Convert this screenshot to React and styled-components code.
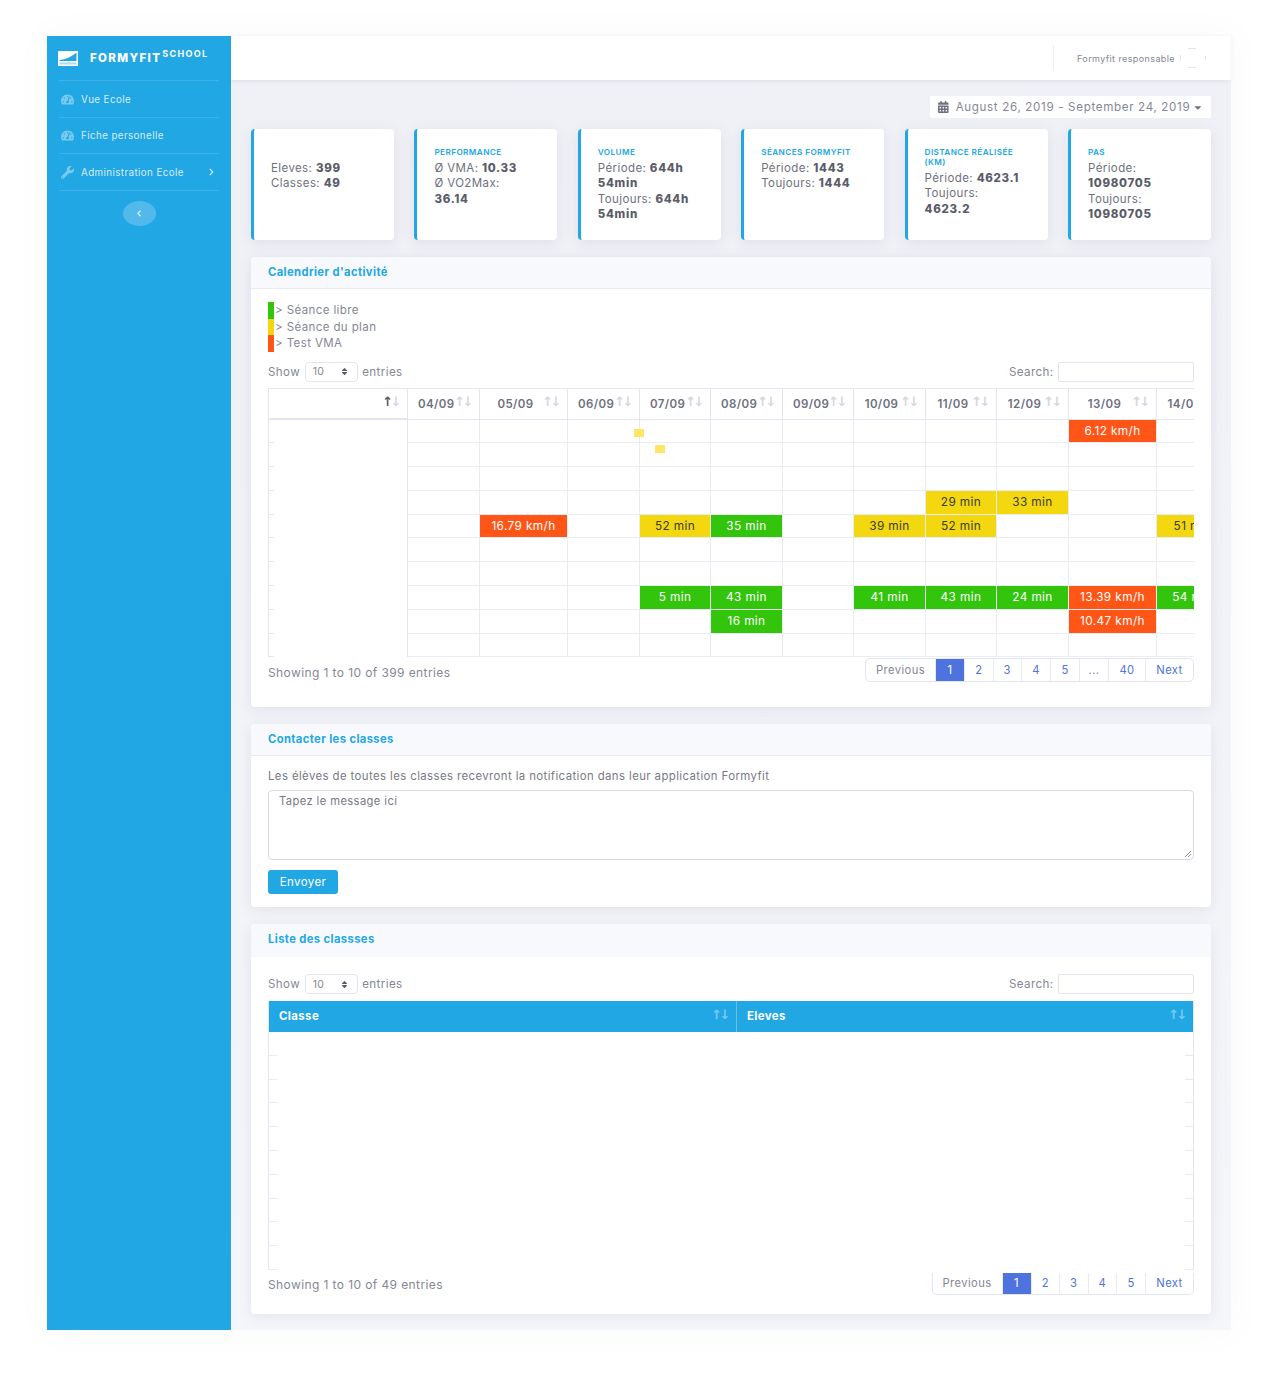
import React from "react";
import styled, { createGlobalStyle } from "styled-components";
import { FaTachometerAlt, FaWrench, FaChevronRight, FaChevronLeft, FaCalendarAlt, FaCaretDown, FaSort } from "react-icons/fa";

const Global = createGlobalStyle`
  html, body { margin: 0; padding: 0; background: #fff; }
  body { font-family: Inter, "Open Sans", sans-serif; font-size: 11.5px; color: #6e707e; letter-spacing: 0.4px; }
  * { box-sizing: border-box; }
`;

const Page = styled.div`
  width: 1278px;
  height: 1376px;
  padding: 36px 47px 46px;
`;
const Frame = styled.div`
  display: flex;
  width: 1184px;
  height: 1294px;
  box-shadow: 0 0 30px rgba(120, 130, 170, 0.05);
`;
const Sidebar = styled.aside`
  width: 184px;
  flex: none;
  background: #22a7e5;
  padding: 0 12px;
  display: flex;
  flex-direction: column;
`;
const Brand = styled.div`
  height: 44px;
  margin: 0 -1px;
  display: flex;
  align-items: center;
  gap: 12px;
  color: #fff;
`;
const BrandText = styled.div`
  font-weight: 800;
  font-size: 11.5px;
  letter-spacing: 1.35px;
  display: flex;
  align-items: flex-start;
  margin-top: -1px;
  sup {
    font-size: 9px;
    font-weight: 700;
    line-height: 9px;
    margin-top: -2px;
    margin-left: 1px;
    letter-spacing: 1.3px;
  }
`;
const NavItem = styled.div`
  height: 36.6px;
  border-top: 1px solid rgba(255, 255, 255, 0.13);
  display: flex;
  align-items: center;
  padding: 1px 4px 0 2px;
  gap: 7px;
  color: rgba(255, 255, 255, 0.82);
  font-size: 9.8px;
  svg { color: rgba(255, 255, 255, 0.4); width: 13px; height: 13px; flex: none; }
  span { flex: 1; }
`;
const NavEnd = styled.div`
  border-top: 1px solid rgba(255, 255, 255, 0.13);
  padding-top: 10px;
  display: flex;
  justify-content: center;
`;
const Toggle = styled.div`
  width: 33px;
  height: 25px;
  border-radius: 50%;
  background: rgba(255, 255, 255, 0.22);
  display: flex;
  align-items: center;
  justify-content: center;
  color: rgba(255, 255, 255, 0.8);
  svg { width: 6px; height: 7px; }
`;
const NavArrow = styled(FaChevronRight)`
  && { width: 7px; height: 8px; color: rgba(255, 255, 255, 0.8); }
`;
const Main = styled.main`
  flex: 1;
  min-width: 0;
  background: linear-gradient(#eff0f5, #f5f6fa);
`;
const Topbar = styled.header`
  height: 44px;
  background: #fff;
  box-shadow: 0 1px 4px rgba(90, 100, 130, 0.1);
  display: flex;
  justify-content: flex-end;
  align-items: center;
  padding-right: 22px;
`;
const TopDivider = styled.div`
  width: 1px;
  height: 25px;
  background: #eceef3;
  margin-right: 23px;
`;
const UserName = styled.div`
  font-size: 9px;
  color: #858796;
  margin-right: 4px;
`;
const Content = styled.div`
  padding: 16px 20px 0;
`;
const DateRow = styled.div`
  display: flex;
  justify-content: flex-end;
  margin-bottom: 11px;
`;
const DatePicker = styled.div`
  width: 281px;
  height: 22px;
  background: #fff;
  border-radius: 2px;
  display: flex;
  align-items: center;
  padding: 0 8px;
  gap: 7px;
  color: #858796;
  font-size: 11.6px;
  letter-spacing: 0.66px;
  white-space: nowrap;
  svg:first-child { width: 12px; height: 12px; color: #6e707e; }
  svg:last-child { width: 11px; height: 11px; margin-left: -4px; color: #6e707e; }
`;
const Cards = styled.div`
  display: grid;
  grid-template-columns: repeat(6, 143px);
  justify-content: space-between;
  margin-bottom: 17px;
`;
const Card = styled.div`
  height: 111px;
  background: #fff;
  border-left: 3px solid #22a7e5;
  border-radius: 4px;
  box-shadow: 0 3px 14px rgba(90, 100, 140, 0.1);
  padding: 18px 24px 0 17px;
  font-size: 11.5px;
  line-height: 15.4px;
  color: #6e707e;
  b { font-weight: 800; color: #5a5c69; letter-spacing: 0.7px; }
`;
const CardTitle = styled.div`
  min-height: 10px;
  margin-bottom: 4px;
  font-size: 8.2px;
  line-height: 10px;
  color: #22a7e5;
  font-weight: 600;
  text-transform: uppercase;
`;
const Panel = styled.section`
  background: #fff;
  border-radius: 4px;
  box-shadow: 0 3px 14px rgba(90, 100, 140, 0.11);
  margin-bottom: 17px;
  height: ${(p) => p.$h}px;
  overflow: hidden;
`;
const PanelHead = styled.div`
  height: ${(p) => p.$h || 32}px;
  background: #f8f9fc;
  border-bottom: ${(p) => (p.$flat ? "none" : "1px solid #e9ebf2")};
  padding: 0 17px ${(p) => (p.$flat ? 3 : 2)}px;
  display: flex;
  align-items: center;
  color: #22a7e5;
  font-weight: 700;
  font-size: 11.2px;
`;
const PanelBody = styled.div`
  padding: ${(p) => p.$top}px 17px 0;
`;
const LegendRow = styled.div`
  display: flex;
  align-items: center;
  height: 16.5px;
  color: #858796;
  font-size: 11.5px;
`;
const Swatch = styled.span`
  width: 6px;
  height: 16.5px;
  background: ${(p) => p.$c};
  margin-right: 1px;
`;
const Controls = styled.div`
  display: flex;
  justify-content: space-between;
  align-items: center;
  height: 20px;
  margin-top: ${(p) => p.$top}px;
  margin-bottom: ${(p) => p.$bottom}px;
  color: #858796;
  font-size: 11.6px;
`;
const ControlGroup = styled.div`
  display: flex;
  align-items: center;
  gap: 4.5px;
`;
const SelectBox = styled.div`
  width: 53px;
  height: 20px;
  border: 1px solid #e3e6f0;
  border-radius: 4px;
  display: flex;
  align-items: center;
  justify-content: space-between;
  padding: 0 9px 0 7px;
  font-size: 10.5px;
  svg { width: 7px; height: 9px; color: #5a5c69; }
`;
const SearchBox = styled.div`
  width: 136px;
  height: 20px;
  border: 1px solid #e3e6f0;
  border-radius: 2px;
`;
const Clip = styled.div`
  width: 926px;
  overflow: hidden;
`;
const CalTable = styled.table`
  table-layout: fixed;
  border-collapse: separate;
  border-spacing: 0;
  width: 961px;
`;
const HeadCell = styled.th`
  position: relative;
  height: 32px;
  padding: 0 26px 0 10px;
  border-top: 1px solid #e3e6f0;
  border-right: 1px solid #e3e6f0;
  border-left: ${(p) => (p.$first ? "1px solid #e3e6f0" : "none")};
  border-bottom: ${(p) => (p.$first ? "2px solid #e3e6f0" : "1px solid #e3e6f0")};
  font-weight: 600;
  font-size: 11.5px;
  color: #6e707e;
  text-align: center;
  white-space: nowrap;
`;
const SortMark = styled.span`
  position: absolute;
  right: ${(p) => p.$right || 8}px;
  top: ${(p) => p.$top || 5}px;
  font-family: "DejaVu Sans", sans-serif;
  font-size: 13px;
  font-weight: 700;
  letter-spacing: -2.5px;
  color: ${(p) => p.$c || "#d5d7df"};
`;
const ActiveArrow = styled.b`
  color: #5a5c69;
`;
const Row = styled.tr`
  height: 23.8px;
`;
const NameCell = styled.td`
  padding: 0;
  border-left: 1px solid #e3e6f0;
  border-right: 1px solid #e3e6f0;
  background: linear-gradient(#e3e6f0, #e3e6f0) left bottom / 5px 1px no-repeat;
`;
const Cell = styled.td`
  position: relative;
  padding: 0;
  height: 23.8px;
  border-right: 1px solid #eaecf3;
  border-bottom: 1px solid #eaecf3;
  background: ${(p) => p.$bg || "transparent"};
  color: ${(p) => p.$fg || "inherit"};
  text-align: center;
  font-size: 11.8px;
  white-space: nowrap;
  overflow: ${(p) => (p.$bg ? "hidden" : "visible")};
`;
const Blip = styled.i`
  position: absolute;
  left: ${(p) => p.$l}px;
  top: ${(p) => p.$t}px;
  width: 10px;
  height: 8px;
  background: #ffe564;
`;
const Footer = styled.div`
  display: flex;
  justify-content: space-between;
  align-items: flex-start;
  margin-top: ${(p) => p.$top}px;
`;
const Showing = styled.div`
  color: #858796;
  font-size: 12px;
  margin-top: ${(p) => p.$top}px;
`;
const Pager = styled.div`
  display: flex;
  height: ${(p) => p.$h}px;
  border: 1px solid #e3e6f0;
  border-top: ${(p) => (p.$open ? "none" : "1px solid #e3e6f0")};
  border-radius: ${(p) => (p.$open ? "0 0 5px 5px" : "5px")};
`;
const PageLink = styled.div`
  width: ${(p) => p.$w}px;
  display: flex;
  align-items: center;
  justify-content: center;
  border-right: ${(p) => (p.$last ? "none" : "1px solid #e9ebf2")};
  font-size: 11.2px;
  color: ${(p) => (p.$on ? "#fff" : p.$off ? "#858796" : "#4e73df")};
  background: ${(p) => (p.$on ? "#4e73df" : "transparent")};
`;
const NoteText = styled.div`
  color: #777985;
  font-size: 11.4px;
  margin-bottom: 7px;
`;
const MessageBox = styled.div`
  height: 70px;
  border: 1px solid #d6d8e2;
  border-radius: 4px;
  padding: 3px 10px;
  font-size: 11.2px;
  color: #777985;
  position: relative;
`;
const Grip = styled.svg`
  position: absolute;
  right: 1px;
  bottom: 1px;
`;
const SendButton = styled.div`
  width: 70px;
  height: 24px;
  margin-top: 10px;
  background: #22a7e5;
  border-radius: 3px;
  color: #fff;
  font-size: 11.5px;
  display: flex;
  align-items: center;
  justify-content: center;
`;
const ClassTable = styled.table`
  table-layout: fixed;
  border-collapse: separate;
  border-spacing: 0;
  width: 926px;
  border-left: 1px solid #e3e6f0;
  border-right: 1px solid #e3e6f0;
`;
const BlueHead = styled.th`
  position: relative;
  height: 31px;
  background: #22a7e5;
  border-right: ${(p) => (p.$last ? "none" : "1px solid rgba(255,255,255,.3)")};
  color: #fff;
  font-size: 11.4px;
  font-weight: 700;
  text-align: left;
  padding: 0 10px 2px;
`;
const ClassRow = styled.tr`
  height: 23.8px;
`;
const ClassCell = styled.td`
  padding: 0;
  background: linear-gradient(#e9ebf2, #e9ebf2) ${(p) => (p.$right ? "right" : "left")} bottom / 8px 1px no-repeat;
`;

const Logo = () => (
  <svg width="20" height="15" viewBox="0 0 20 15">
    <rect width="20" height="15" rx="0.5" fill="#fff" />
    <path d="M1.5 9 C8 8.5 13 6 18.5 1.5 V10 H1.5Z" fill="#22a7e5" />
    <rect x="1.5" y="11.5" width="17" height="2" fill="#a9dbf4" />
  </svg>
);
const Avatar = () => (
  <svg width="30" height="24" viewBox="0 0 30 24">
    <g stroke="#e6e7ec" fill="none">
      <path d="M1.5 9v6" />
      <path d="M9 2.5h8" />
      <path d="M9 21.5h8" />
      <path d="M26.5 10v4" />
    </g>
  </svg>
);

const colW = [140, 72, 88, 72, 71, 72, 71, 72, 71, 72, 88, 72];
const dates = ["", "04/09", "05/09", "06/09", "07/09", "08/09", "09/09", "10/09", "11/09", "12/09", "13/09", "14/09"];
const G = ["#33c40c", "#fff"], Y = ["#f3d70f", "#3c3c34"], R = ["#ff5517", "#fff"];
const rows = [
  { 10: ["6.12 km/h", R] },
  {},
  {},
  { 8: ["29 min", Y], 9: ["33 min", Y] },
  { 2: ["16.79 km/h", R], 4: ["52 min", Y], 5: ["35 min", G], 7: ["39 min", Y], 8: ["52 min", Y], 11: ["51 min", Y] },
  {},
  {},
  { 4: ["5 min", G], 5: ["43 min", G], 7: ["41 min", G], 8: ["43 min", G], 9: ["24 min", G], 10: ["13.39 km/h", R], 11: ["54 min", G] },
  { 5: ["16 min", G], 10: ["10.47 km/h", R] },
  {},
];
const pages1 = [["Previous", 70, "off"], ["1", 29, "on"], ["2", 28.5], ["3", 28.5], ["4", 29], ["5", 29], ["...", 29, "off"], ["40", 37], ["Next", 47, "last"]];
const pages2 = [["Previous", 70, "off"], ["1", 29, "on"], ["2", 28.5], ["3", 28.5], ["4", 28.5], ["5", 29], ["Next", 47, "last"]];

const Pagination = ({ items, h, open }) => (
  <Pager $h={h} $open={open}>
    {items.map(([t, w, k]) => (
      <PageLink key={t} $w={w} $on={k === "on"} $off={k === "off"} $last={k === "last"}>{t}</PageLink>
    ))}
  </Pager>
);

const TableControls = ({ top, bottom }) => (
  <Controls $top={top} $bottom={bottom}>
    <ControlGroup>
      Show
      <SelectBox>10<FaSort /></SelectBox>
      entries
    </ControlGroup>
    <ControlGroup>
      Search:
      <SearchBox />
    </ControlGroup>
  </Controls>
);

export default function App() {
  return (
    <Page>
      <Global />
      <Frame>
        <Sidebar>
          <Brand>
            <Logo />
            <BrandText>FORMYFIT<sup>SCHOOL</sup></BrandText>
          </Brand>
          <NavItem><FaTachometerAlt /><span>Vue Ecole</span></NavItem>
          <NavItem><FaTachometerAlt /><span>Fiche personelle</span></NavItem>
          <NavItem><FaWrench /><span>Administration Ecole</span><NavArrow /></NavItem>
          <NavEnd><Toggle><FaChevronLeft /></Toggle></NavEnd>
        </Sidebar>
        <Main>
          <Topbar>
            <TopDivider />
            <UserName>Formyfit responsable</UserName>
            <Avatar />
          </Topbar>
          <Content>
            <DateRow>
              <DatePicker>
                <FaCalendarAlt />
                August 26, 2019 - September 24, 2019
                <FaCaretDown />
              </DatePicker>
            </DateRow>
            <Cards>
              <Card><CardTitle />Eleves: <b>399</b><br />Classes: <b>49</b></Card>
              <Card><CardTitle>Performance</CardTitle>Ø VMA: <b>10.33</b><br />Ø VO2Max: <b>36.14</b></Card>
              <Card><CardTitle>Volume</CardTitle>Période: <b>644h 54min</b><br />Toujours: <b>644h 54min</b></Card>
              <Card><CardTitle>Séances Formyfit</CardTitle>Période: <b>1443</b><br />Toujours: <b>1444</b></Card>
              <Card><CardTitle>Distance réalisée (km)</CardTitle>Période: <b>4623.1</b><br />Toujours: <b>4623.2</b></Card>
              <Card><CardTitle>Pas</CardTitle>Période: <b>10980705</b><br />Toujours: <b>10980705</b></Card>
            </Cards>

            <Panel $h={450}>
              <PanelHead>Calendrier d'activité</PanelHead>
              <PanelBody $top={13}>
                <LegendRow><Swatch $c="#33c40c" />&gt; Séance libre</LegendRow>
                <LegendRow><Swatch $c="#f3d70f" />&gt; Séance du plan</LegendRow>
                <LegendRow><Swatch $c="#ff5517" />&gt; Test VMA</LegendRow>
                <TableControls top={10} bottom={6} />
                <Clip>
                  <CalTable>
                    <colgroup>
                      {colW.map((w, i) => <col key={i} style={{ width: w }} />)}
                    </colgroup>
                    <thead>
                      <tr>
                        {dates.map((d, i) => (
                          <HeadCell key={i} $first={i === 0}>
                            {d}
                            {i === 0
                              ? <SortMark><ActiveArrow>↑</ActiveArrow>↓</SortMark>
                              : <SortMark>↑↓</SortMark>}
                          </HeadCell>
                        ))}
                      </tr>
                    </thead>
                    <tbody>
                      {rows.map((r, ri) => (
                        <Row key={ri}>
                          <NameCell />
                          {dates.slice(1).map((_, ci) => {
                            const c = r[ci + 1];
                            return (
                              <Cell key={ci} $bg={c && c[1][0]} $fg={c && c[1][1]}>
                                {c && c[0]}
                                {ri === 0 && ci === 3 && <Blip $l={-6} $t={9} />}
                                {ri === 1 && ci === 3 && <Blip $l={15} $t={2} />}
                              </Cell>
                            );
                          })}
                        </Row>
                      ))}
                    </tbody>
                  </CalTable>
                </Clip>
                <Footer $top={1}>
                  <Showing $top={7}>Showing 1 to 10 of 399 entries</Showing>
                  <Pagination items={pages1} h={24} />
                </Footer>
              </PanelBody>
            </Panel>

            <Panel $h={183}>
              <PanelHead>Contacter les classes</PanelHead>
              <PanelBody $top={13}>
                <NoteText>Les élèves de toutes les classes recevront la notification dans leur application Formyfit</NoteText>
                <MessageBox>
                  Tapez le message ici
                  <Grip width="8" height="8" viewBox="0 0 8 8">
                    <path d="M7 1L1 7M7 4L4 7" stroke="#8a8c96" strokeWidth="1" />
                  </Grip>
                </MessageBox>
                <SendButton>Envoyer</SendButton>
              </PanelBody>
            </Panel>

            <Panel $h={390}>
              <PanelHead $flat $h={33}>Liste des classses</PanelHead>
              <PanelBody $top={17}>
                <TableControls top={0} bottom={7} />
                <ClassTable>
                  <colgroup>
                    <col style={{ width: 468 }} />
                    <col />
                  </colgroup>
                  <thead>
                    <tr>
                      <BlueHead>Classe<SortMark $c="rgba(255,255,255,.4)" $top={6}>↑↓</SortMark></BlueHead>
                      <BlueHead $last>Eleves<SortMark $c="rgba(255,255,255,.4)" $top={6}>↑↓</SortMark></BlueHead>
                    </tr>
                  </thead>
                  <tbody>
                    {Array.from({ length: 10 }, (_, i) => (
                      <ClassRow key={i}>
                        <ClassCell />
                        <ClassCell $right />
                      </ClassRow>
                    ))}
                  </tbody>
                </ClassTable>
                <Footer $top={3}>
                  <Showing $top={4}>Showing 1 to 10 of 49 entries</Showing>
                  <Pagination items={pages2} h={22} open />
                </Footer>
              </PanelBody>
            </Panel>
          </Content>
        </Main>
      </Frame>
    </Page>
  );
}
